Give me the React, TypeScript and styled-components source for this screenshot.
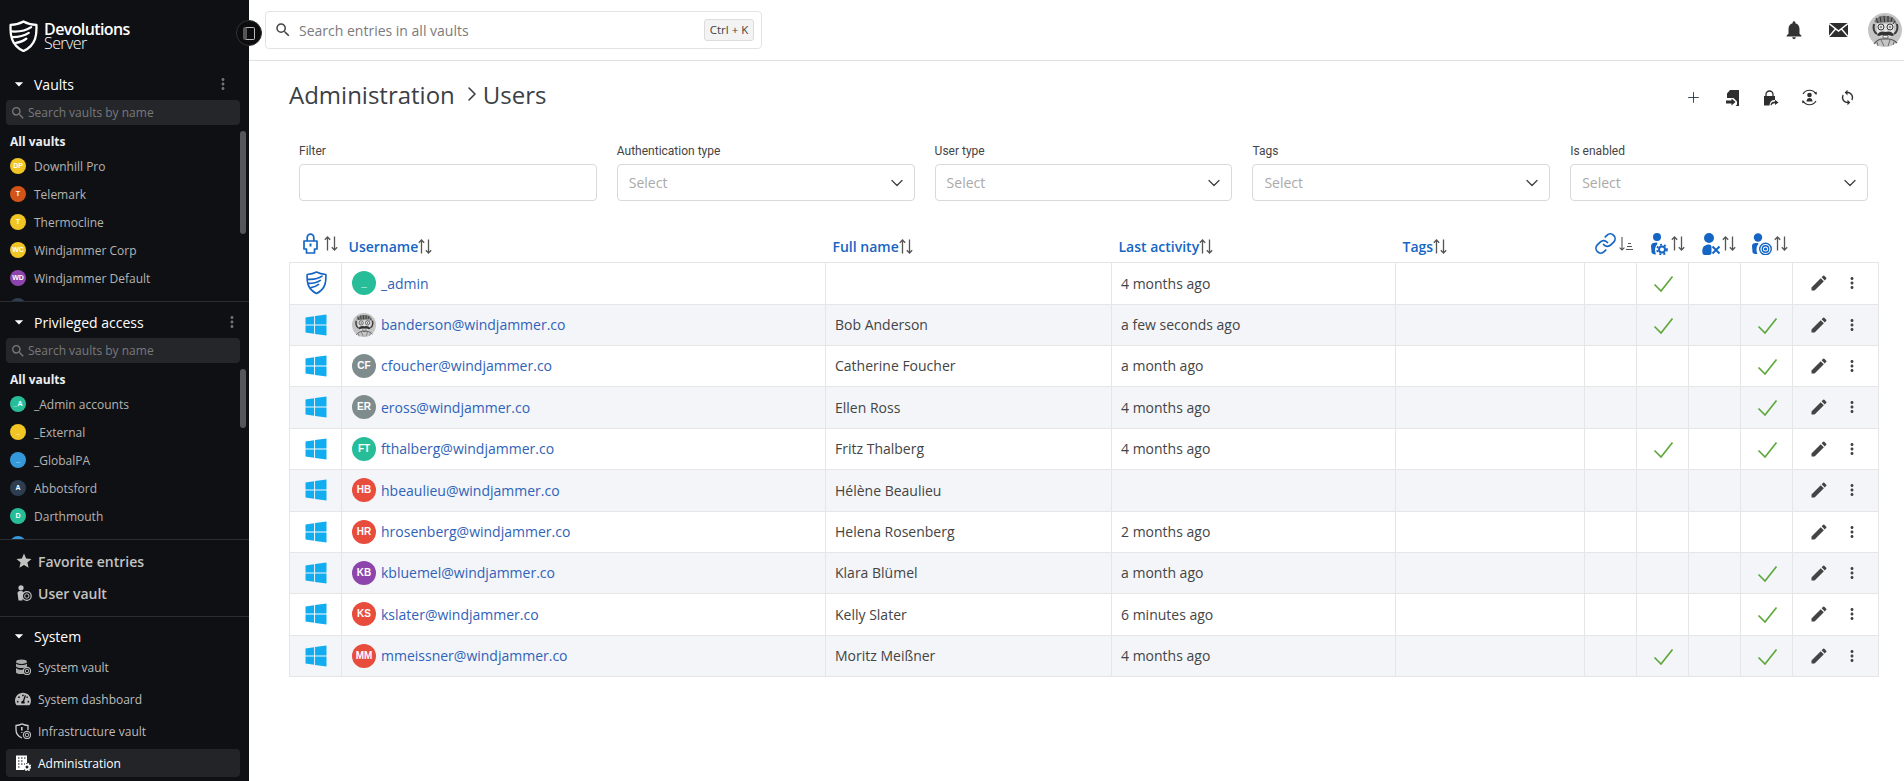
import { ReactElement } from 'react'
import styled, { createGlobalStyle } from 'styled-components'
import { FaTachometerAlt, FaWindows } from 'react-icons/fa'
import { MdArrowDropDown, MdEdit, MdMoreVert, MdNotifications, MdSearch, MdStar, MdSync } from 'react-icons/md'
import { LuChevronDown, LuChevronRight, LuLink, LuPlus } from 'react-icons/lu'

const BLUE = '#1565c4'

const GlobalStyle = createGlobalStyle`
  html, body { margin: 0; padding: 0; height: 100%; background: #fff; overflow: hidden; }
  body { font-family: "Open Sans", "Liberation Sans", sans-serif; color: #444; }
  * { box-sizing: border-box; }
`

const Shell = styled.div`
  display: flex;
  height: 781px;
  width: 1904px;
  position: relative;
`

/* sidebar */

const Sidebar = styled.aside`
  width: 249px;
  flex: none;
  height: 100%;
  background: #0f1013;
  color: #bdbdbd;
  overflow: hidden;
  display: flex;
  flex-direction: column;
`

const Brand = styled.div`
  height: 64px;
  padding: 8px 0 0 9px;
  display: flex;
  align-items: center;
  gap: 6px;
  flex: none;
`

const BrandText = styled.div`
  display: flex;
  flex-direction: column;
  color: #fff;
  font-size: 16px;
  line-height: 14px;
  letter-spacing: -0.6px;
`

const BrandName = styled.span`
  font-weight: 600;
`

const BrandSub = styled.span`
  font-weight: 300;
`

const Section = styled.section`
  height: 238px;
  padding-top: 8px;
  flex: none;
  border-bottom: 1px solid #2c2d30;
  position: relative;
  overflow: hidden;
`

const SectionHead = styled.div<{ $moreGap?: number }>`
  height: 24px;
  display: flex;
  align-items: center;
  padding: 0 ${(p) => p.$moreGap ?? 17}px 0 9px;
  color: #fff;
  font-size: 14px;
  svg.caret { color: #fff; margin-right: 5px; }
  span { flex: 1; }
  svg.more { color: #6f7175; }
`

const VaultSearch = styled.div`
  margin: 4px 9px 0 6px;
  height: 25px;
  background: #25262a;
  border-radius: 4px;
  display: flex;
  align-items: center;
  gap: 2px;
  padding-left: 4px;
  color: #77797d;
  font-size: 12px;
`

const VaultList = styled.div`
  height: 176px;
  overflow: hidden;
  padding-top: 7px;
`

const VaultHeading = styled.div`
  height: 20px;
  line-height: 20px;
  padding-left: 10px;
  font-size: 12px;
  font-weight: 700;
  color: #eee;
`

const VaultItem = styled.div`
  height: 28px;
  display: flex;
  align-items: center;
  gap: 8px;
  padding-left: 10px;
  font-size: 12px;
  color: #b4b4b4;
`

const VaultBadge = styled.span<{ $bg: string }>`
  width: 16px;
  height: 16px;
  flex: none;
  border-radius: 50%;
  background: ${(p) => p.$bg};
  color: #fff;
  font: 700 7px/16px "Liberation Sans", sans-serif;
  text-align: center;
`

const ScrollThumb = styled.div<{ $height: number }>`
  position: absolute;
  right: 3px;
  top: 67px;
  height: ${(p) => p.$height}px;
  width: 6px;
  border-radius: 3px;
  background: #55565a;
`

const QuickLinks = styled.div`
  height: 77px;
  flex: none;
  padding-top: 5px;
  border-bottom: 1px solid #2c2d30;
`

const QuickLink = styled.div`
  height: 32px;
  display: flex;
  align-items: center;
  gap: 5px;
  padding-left: 15px;
  font-size: 14px;
  font-weight: 600;
  color: #c2c2c2;
  svg { flex: none; width: 18px; }
`

const SystemSection = styled.section`
  padding-top: 7px;
`

const SystemList = styled.nav`
  margin-top: 5px;
  display: flex;
  flex-direction: column;
  gap: 4px;
`

const SystemItem = styled.div<{ $active?: boolean }>`
  height: 28px;
  margin: 0 9px 0 6px;
  padding-left: 9px;
  display: flex;
  align-items: center;
  gap: 7px;
  border-radius: 4px;
  font-size: 12px;
  background: ${(p) => (p.$active ? '#232427' : 'transparent')};
  color: ${(p) => (p.$active ? '#fff' : '#bdbdbd')};
  svg { flex: none; }
`

const CollapseButton = styled.button`
  position: absolute;
  left: 236px;
  top: 20px;
  width: 26px;
  height: 26px;
  border-radius: 50%;
  border: 1px solid #333;
  background: #0c0c0e;
  padding: 0;
  display: flex;
  align-items: center;
  justify-content: center;
  z-index: 2;
`

const CollapseGlyph = styled.span`
  width: 12px;
  height: 13px;
  border: 1.5px solid #bbb;
  border-radius: 2px;
  border-left-width: 4px;
  border-left-color: #555;
`

/* top bar */

const Main = styled.main`
  flex: 1;
  min-width: 0;
  display: flex;
  flex-direction: column;
`

const TopBar = styled.header`
  height: 61px;
  flex: none;
  border-bottom: 1px solid #e1e1e1;
  display: flex;
  align-items: center;
  padding: 0 2px 0 16px;
`

const GlobalSearch = styled.label`
  width: 497px;
  height: 38px;
  border: 1px solid #e3e3e3;
  border-radius: 4px;
  display: flex;
  align-items: center;
  padding: 0 7px 0 8px;
  gap: 5px;
  color: #444;
`

const GlobalInput = styled.input`
  flex: 1;
  border: 0;
  outline: 0;
  min-width: 0;
  font: 400 14px "Open Sans", sans-serif;
  &::placeholder { color: #7b7b7b; opacity: 1; }
`

const Shortcut = styled.kbd`
  width: 50px;
  height: 22px;
  border: 1px solid #dcdcdc;
  border-radius: 3px;
  background: #f3f3f3;
  font: 400 11.5px/20px "Open Sans", sans-serif;
  text-align: center;
  color: #444;
`

const TopActions = styled.div`
  margin-left: auto;
  display: flex;
  align-items: center;
`

const TopIcon = styled.span`
  width: 45px;
  display: flex;
  justify-content: center;
  color: #333;
  &:nth-child(2) { margin-right: 7px; }
`

const UserPhoto = styled.span<{ $size: number }>`
  width: ${(p) => p.$size}px;
  height: ${(p) => p.$size}px;
  flex: none;
  display: block;
  svg { display: block; }
`

/* page */

const Page = styled.div`
  flex: 1;
  padding: 0 26px 0 40px;
`

const TitleRow = styled.div`
  height: 66px;
  display: flex;
  align-items: center;
  justify-content: space-between;
`

const Title = styled.h1`
  margin: 0;
  display: flex;
  align-items: center;
  font-size: 24px;
  font-weight: 500;
  color: #3b3f45;
  svg { margin: 0 -1px 0 5px; }
`

const PageActions = styled.div`
  display: flex;
  align-items: center;
  padding: 7px 11px 0 0;
  color: #333;
`

const PageAction = styled.span`
  width: 38.5px;
  display: flex;
  justify-content: center;
`

const Filters = styled.div`
  margin-top: 16px;
  padding: 0 10px;
  display: grid;
  grid-template-columns: repeat(5, 1fr);
  gap: 20px;
`

const Field = styled.div`
  display: flex;
  flex-direction: column;
  gap: 5px;
`

const FieldLabel = styled.label`
  font: 400 12px/16px Roboto, sans-serif;
  color: #444;
`

const FieldBox = styled.div`
  height: 37px;
  border: 1px solid #d9d9d9;
  border-radius: 4px;
  display: flex;
  align-items: center;
  justify-content: space-between;
  padding: 0 7px 0 11px;
  font-size: 14px;
  color: #a9a9a9;
  background: #fff;
  svg { color: #444; }
`

const Table = styled.table`
  margin-top: 20px;
  width: 1589px;
  table-layout: fixed;
  border-collapse: collapse;
`

const HeadCell = styled.th<{ $pad?: number }>`
  height: 41px;
  padding: 10px 0 0 ${(p) => p.$pad ?? 7}px;
  text-align: left;
  vertical-align: middle;
`

const HeadLabel = styled.span<{ $gap?: number }>`
  display: inline-flex;
  align-items: center;
  gap: ${(p) => p.$gap ?? 0}px;
  font-size: 14px;
  font-weight: 600;
  color: ${BLUE};
`

const Row = styled.tr<{ $alt: boolean; $height: number }>`
  height: ${(p) => p.$height}px;
  background: ${(p) => (p.$alt ? '#f3f5f9' : '#fff')};
`

const Cell = styled.td`
  border: 1px solid #e6e6e6;
  padding: 0 9px;
  font-size: 14px;
  color: #444;
  white-space: nowrap;
`

const CenterCell = styled(Cell)`
  padding: 0 0 0 1px;
  text-align: center;
  svg { display: inline-block; vertical-align: middle; }
`

const UserCell = styled.div`
  display: flex;
  align-items: center;
  gap: 5px;
  padding-left: 1px;
`

const UserLink = styled.a`
  color: #2f62b8;
  text-decoration: none;
`

const UserBadge = styled.span<{ $bg: string }>`
  width: 24px;
  height: 24px;
  flex: none;
  border-radius: 50%;
  background: ${(p) => p.$bg};
  color: #fff;
  font: 700 10px/24px "Liberation Sans", sans-serif;
  text-align: center;
`

const RowTools = styled.div`
  display: flex;
  align-items: center;
  justify-content: flex-end;
  gap: 14px;
  padding-right: 8px;
  color: #444;
`

/* drawings */

function ShieldLogo({ color, size, weight }: { color: string; size: number; weight: number }): ReactElement {
  return (
    <svg width={size} height={size * 1.12} viewBox="0 0 30 34" fill="none" stroke={color} strokeWidth={weight} strokeLinecap="round">
      <path d="M15 1.5 C19 3.8 24 4.8 28.5 5 C29 14 28.8 26 15 32.5 C1.2 26 1 14 1.5 5 C6 4.8 11 3.8 15 1.5 Z" strokeLinejoin="round" />
      <path d="M2.5 12 C10 12.5 18 11 23 7.5" />
      <path d="M3.5 18 C10 18 16 16.5 20.5 13.5" />
      <path d="M7 24 C11 23.5 15 22 18 19.5" />
    </svg>
  )
}

function SortArrows(): ReactElement {
  return (
    <svg width="14" height="15" viewBox="0 0 14 15" fill="none" stroke="#555" strokeWidth="1.3">
      <path d="M3.5 14.5 V1 M0.8 3.7 L3.5 1 L6.2 3.7" />
      <path d="M10.5 0.5 V14 M7.8 11.3 L10.5 14 L13.2 11.3" />
    </svg>
  )
}

function SortAmount(): ReactElement {
  return (
    <svg width="14" height="15" viewBox="0 0 14 15" fill="none" stroke="#555" strokeWidth="1.1">
      <path d="M3 1 V14 M0.6 11.6 L3 14 L5.4 11.6" />
      <path d="M7 13.5 H14 M8 10.5 H13 M9 7.5 H12" />
    </svg>
  )
}

function LockPerson(): ReactElement {
  return (
    <svg width="15" height="21" viewBox="0 0 15 21" fill="none" stroke={BLUE} strokeWidth="1.7" strokeLinejoin="round">
      <path d="M4.2 8 V4.5 A3.3 3.3 0 0 1 10.8 4.5 V8" />
      <path d="M1 8 H14 V16 H11.5 V20 H3.5 V16 H1 Z" />
      <path d="M7.5 10.5 V13.5" strokeWidth="2" />
    </svg>
  )
}

function PersonGear(): ReactElement {
  return (
    <svg width="17" height="22" viewBox="0 0 17 22">
      <circle cx="6" cy="4" r="4" fill={BLUE} />
      <path d="M0 13 C0 10.5 2 9.5 6 9.5 L6.5 11 C5 12.5 4 14.5 4 17 C4 18.5 4.5 20 5 21.5 C2 21.5 0.5 20.5 0.5 19 Z" fill={BLUE} />
      <g fill="none" stroke={BLUE}>
        <circle cx="11" cy="16.5" r="3" strokeWidth="2" />
        <circle cx="11" cy="16.5" r="4.9" strokeWidth="1.8" strokeDasharray="2 2.1" />
      </g>
    </svg>
  )
}

function PersonCross(): ReactElement {
  return (
    <svg width="18" height="22" viewBox="0 0 18 22">
      <circle cx="7" cy="5" r="5" fill={BLUE} />
      <path d="M0.5 16 C1 13 4 11.5 7 11.5 C8.5 11.5 9.5 12.5 9.5 14 V20 C9.5 21 8.5 22 7 22 H2.5 C0.5 22 0 19 0.5 16 Z" fill={BLUE} />
      <path d="M10.5 13.5 L17.5 20.5 M17.5 13.5 L10.5 20.5" stroke={BLUE} strokeWidth="2" />
    </svg>
  )
}

function PersonTarget(): ReactElement {
  return (
    <svg width="20" height="22" viewBox="0 0 20 22">
      <circle cx="6" cy="4.5" r="4.2" fill={BLUE} />
      <path d="M0 13 C0 10.5 2 10 6 10 L6.5 11 C5 12.5 4.5 14.5 4.5 16.5 C4.5 18.5 5 20 5.5 21 C2 21 0.5 20.5 0.5 19 Z" fill={BLUE} />
      <g fill="none" stroke={BLUE} strokeWidth="1.4">
        <circle cx="13.5" cy="16" r="5.8" />
        <circle cx="13.5" cy="16" r="3.2" />
        <circle cx="13.5" cy="16" r="0.9" />
      </g>
    </svg>
  )
}

function Check(): ReactElement {
  return (
    <svg width="21" height="18" viewBox="0 0 21 18" fill="none" stroke="#5fa83c" strokeWidth="1.7">
      <path d="M1.5 9.5 L8 16 L19.5 1.5" />
    </svg>
  )
}

function Portrait({ size }: { size: number }): ReactElement {
  return (
    <UserPhoto $size={size}>
      <svg width={size} height={size} viewBox="0 0 34 34">
        <circle cx="17" cy="17" r="17" fill="#c4c4c4" />
        <path d="M6 9 C9 3 14 2 19 3 C25 3 29 7 29 13 L26 9 L9 10 Z" fill="#7b7b7b" />
        <path d="M8 5 L10 10 M12 3.5 L13 9 M16 3 L16.5 9 M20 3 L20 9 M24 4.5 L23 9 M27 8 L25 11" stroke="#2f2f2f" strokeWidth="1" />
        <path d="M9 11 H26 V20 C25 24 21 25 17 25 C13 25 9 23 9 19 Z" fill="#e0e0e0" />
        <path d="M6 11 C5 15 6 19 9 21 M29 11 C30 15 29 19 26 21" fill="none" stroke="#3a3a3a" strokeWidth="2" />
        <circle cx="13" cy="14" r="3" fill="none" stroke="#3a3a3a" strokeWidth="1" />
        <circle cx="22" cy="14" r="3" fill="none" stroke="#3a3a3a" strokeWidth="1" />
        <circle cx="13" cy="14" r="0.8" fill="#2a2a2a" />
        <circle cx="22" cy="14" r="0.8" fill="#2a2a2a" />
        <path d="M9 22 C11 18 15 18 17.5 19 C20 18 24 18 26 22 C24 24 22 22 20 22 L15 22 C13 22 11 24 9 22 Z" fill="#333" />
        <path d="M15 22.5 H20 V25 H15 Z" fill="#f4f4f4" stroke="#222" strokeWidth="0.6" />
        <path d="M6 31 C8 28 12 26 15 26 L20 26 C24 26 27 28 29 30" fill="none" stroke="#555" strokeWidth="1.2" />
        <path d="M13 27 L16 33 M22 27 L20 33 M9 29 L10 33 M26 29 L25 32" stroke="#6b6b6b" />
      </svg>
    </UserPhoto>
  )
}

function MailIcon(): ReactElement {
  return (
    <svg width="19" height="14" viewBox="0 0 19 14">
      <rect width="19" height="14" fill="#2e2e2e" />
      <path d="M0 0.5 L9.5 8 L19 0.5 M0 13.5 L6.5 6 M19 13.5 L12.5 6" fill="none" stroke="#fff" strokeWidth="1.4" />
    </svg>
  )
}

function FileArrow(): ReactElement {
  return (
    <svg width="13" height="16" viewBox="0 0 13 16" fill="#2e2e2e">
      <path d="M4 0 H13 V16 H9.5 L11 14.5 V11.5 L7.5 8 H1 V3.5 Z" />
      <path d="M0 10.5 H5.5 V8.5 L9.5 12 L5.5 15.5 V13.5 H0 Z" />
    </svg>
  )
}

function LockArrow(): ReactElement {
  return (
    <svg width="16" height="16" viewBox="0 0 16 16">
      <path d="M3 6 V4.5 A3.5 3.5 0 0 1 10 4.5 V6" fill="none" stroke="#2e2e2e" strokeWidth="1.3" />
      <path d="M1 6 H12 V10 C9 10 7 11 6.5 15.5 H1 Z" fill="#2e2e2e" />
      <path d="M7.5 15 C8 12 10 11.5 12 11.5 V9.8 L15.5 12.5 L12 15 V13.3 C10 13.3 9 14 8.5 15.5 Z" fill="#2e2e2e" />
    </svg>
  )
}

function CircleUser(): ReactElement {
  return (
    <svg width="17" height="17" viewBox="0 0 17 17" fill="none">
      <path d="M2 5 A7.5 7.5 0 0 1 15 5 M15 12 A7.5 7.5 0 0 1 2 12" stroke="#2e2e2e" strokeWidth="1.2" />
      <path d="M13 3.8 L15.5 6 L15.8 2.8 Z M4 13.2 L1.5 11 L1.2 14.2 Z" fill="#2e2e2e" />
      <circle cx="8.5" cy="6" r="2.3" fill="#2e2e2e" />
      <path d="M5.5 12.5 C5.5 10 7 9 8.5 9 C10 9 11.5 10 11.5 12.5 Z" fill="#2e2e2e" />
    </svg>
  )
}

function DiscBadge({ cx, cy, r, stroke }: { cx: number; cy: number; r: number; stroke: string }): ReactElement {
  return (
    <g fill="none" stroke={stroke}>
      <circle cx={cx} cy={cy} r={r} fill="#0f1013" strokeWidth="1.2" />
      <circle cx={cx} cy={cy} r={r / 2} strokeWidth="1" />
    </g>
  )
}

function UserVaultIcon(): ReactElement {
  return (
    <svg width="18" height="16" viewBox="0 0 16 16" fill="#c2c2c2">
      <circle cx="5" cy="2.8" r="2.6" />
      <path d="M1.5 8 C1.5 6.5 3 6 5 6 C7 6 8 7 7.5 8 L6.5 15.5 H2.5 Z" />
      <DiscBadge cx={10.8} cy={11} r={4.4} stroke="#c2c2c2" />
    </svg>
  )
}

function DatabaseIcon(): ReactElement {
  return (
    <svg width="16" height="16" viewBox="0 0 16 16" fill="#aaa">
      <ellipse cx="6.5" cy="2.7" rx="5.5" ry="2.3" />
      <path d="M1 4.5 C3 6.5 10 6.5 12 4.5 V7.5 C10 9.5 3 9.5 1 7.5 Z" />
      <path d="M1 9 C3 11 8 11 9 10.5 V14.8 C6 15.5 2 15 1 13.5 Z" />
      <DiscBadge cx={12} cy={12} r={3.6} stroke="#bbb" />
    </svg>
  )
}

function ShieldBadgeIcon(): ReactElement {
  return (
    <svg width="16" height="16" viewBox="0 0 16 16" fill="none" stroke="#ccc" strokeWidth="1.3">
      <path d="M7 0.8 C9 1.8 11 2.3 13 2.5 V7 M7 15 C3 13.5 1 10 1 6.5 V2.5 C3 2.3 5 1.8 7 0.8" />
      <path d="M6.8 4 V7.5 M6.8 9 V9.8" strokeWidth="1.6" />
      <DiscBadge cx={12} cy={12} r={3.6} stroke="#bbb" />
    </svg>
  )
}

function AdminIcon(): ReactElement {
  return (
    <svg width="16" height="16" viewBox="0 0 16 16">
      <path d="M1 0.5 H12 V8 H9 V15 H1 Z" fill="#fff" />
      <path d="M3 3 H4.5 M6 3 H7.5 M9 3 H10.5 M3 6 H4.5 M6 6 H7.5 M3 9 H4.5 M6 9 H7.5 M3 12 H4.5" stroke="#0f1013" strokeWidth="1.2" />
      <circle cx="12" cy="12" r="2.4" fill="none" stroke="#fff" strokeWidth="1.8" />
      <circle cx="12" cy="12" r="3.8" fill="none" stroke="#fff" strokeWidth="1.2" strokeDasharray="1.5 1.5" />
    </svg>
  )
}

/* data */

const vaults = [
  { initials: 'DP', name: 'Downhill Pro', color: '#f1c523' },
  { initials: 'T', name: 'Telemark', color: '#d35419' },
  { initials: 'T', name: 'Thermocline', color: '#f1c523' },
  { initials: 'WC', name: 'Windjammer Corp', color: '#f1c523' },
  { initials: 'WD', name: 'Windjammer Default', color: '#8e44ad' },
  { initials: '', name: '', color: '#2c3e50' },
]

const privileged = [
  { initials: '_A', name: '_Admin accounts', color: '#26bd98' },
  { initials: '_', name: '_External', color: '#f1c523' },
  { initials: '_', name: '_GlobalPA', color: '#3498db' },
  { initials: 'A', name: 'Abbotsford', color: '#2c3e50' },
  { initials: 'D', name: 'Darthmouth', color: '#26bd98' },
  { initials: '', name: '', color: '#3498db' },
]

type User = {
  mail: string
  name: string
  activity: string
  initials?: string
  color?: string
  admin?: boolean
  gear?: boolean
  target?: boolean
}

const users: User[] = [
  { mail: '_admin', name: '', activity: '4 months ago', initials: '_', color: '#26bd98', admin: true, gear: true },
  { mail: 'banderson@windjammer.co', name: 'Bob Anderson', activity: 'a few seconds ago', gear: true, target: true },
  { mail: 'cfoucher@windjammer.co', name: 'Catherine Foucher', activity: 'a month ago', initials: 'CF', color: '#7f8c8d', target: true },
  { mail: 'eross@windjammer.co', name: 'Ellen Ross', activity: '4 months ago', initials: 'ER', color: '#7f8c8d', target: true },
  { mail: 'fthalberg@windjammer.co', name: 'Fritz Thalberg', activity: '4 months ago', initials: 'FT', color: '#26bd98', gear: true, target: true },
  { mail: 'hbeaulieu@windjammer.co', name: 'Hélène Beaulieu', activity: '', initials: 'HB', color: '#e74c3c' },
  { mail: 'hrosenberg@windjammer.co', name: 'Helena Rosenberg', activity: '2 months ago', initials: 'HR', color: '#e74c3c' },
  { mail: 'kbluemel@windjammer.co', name: 'Klara Blümel', activity: 'a month ago', initials: 'KB', color: '#8e44ad', target: true },
  { mail: 'kslater@windjammer.co', name: 'Kelly Slater', activity: '6 minutes ago', initials: 'KS', color: '#e74c3c', target: true },
  { mail: 'mmeissner@windjammer.co', name: 'Moritz Meißner', activity: '4 months ago', initials: 'MM', color: '#e74c3c', gear: true, target: true },
]

const columns = [52, 484, 286, 284, 189, 52, 52, 52, 52, 86]
const rowHeights = [42, 41, 41, 42, 41, 42, 41, 41, 42, 41]

function VaultGroup(props: { title: string; items: typeof vaults; moreGap: number; thumbHeight: number }): ReactElement {
  return (
    <Section>
      <SectionHead $moreGap={props.moreGap}>
        <MdArrowDropDown className="caret" size={20} />
        <span>{props.title}</span>
        <MdMoreVert className="more" size={18} />
      </SectionHead>
      <VaultSearch>
        <MdSearch size={16} />
        Search vaults by name
      </VaultSearch>
      <VaultList>
        <VaultHeading>All vaults</VaultHeading>
        {props.items.map((v, i) => (
          <VaultItem key={i}>
            <VaultBadge $bg={v.color}>{v.initials}</VaultBadge>
            {v.name}
          </VaultItem>
        ))}
      </VaultList>
      <ScrollThumb $height={props.thumbHeight} />
    </Section>
  )
}

export default function App(): ReactElement {
  return (
    <Shell>
      <GlobalStyle />
      <Sidebar>
        <Brand>
          <ShieldLogo color="#fff" size={29} weight={2.4} />
          <BrandText>
            <BrandName>Devolutions</BrandName>
            <BrandSub>Server</BrandSub>
          </BrandText>
        </Brand>
        <VaultGroup title="Vaults" items={vaults} moreGap={17} thumbHeight={103} />
        <VaultGroup title="Privileged access" items={privileged} moreGap={8} thumbHeight={59} />
        <QuickLinks>
          <QuickLink>
            <MdStar size={18} />
            Favorite entries
          </QuickLink>
          <QuickLink>
            <UserVaultIcon />
            User vault
          </QuickLink>
        </QuickLinks>
        <SystemSection>
          <SectionHead>
            <MdArrowDropDown className="caret" size={20} />
            <span>System</span>
          </SectionHead>
          <SystemList>
            <SystemItem>
              <DatabaseIcon />
              System vault
            </SystemItem>
            <SystemItem>
              <FaTachometerAlt size={16} color="#bbb" />
              System dashboard
            </SystemItem>
            <SystemItem>
              <ShieldBadgeIcon />
              Infrastructure vault
            </SystemItem>
            <SystemItem $active>
              <AdminIcon />
              Administration
            </SystemItem>
          </SystemList>
        </SystemSection>
      </Sidebar>
      <CollapseButton aria-label="Collapse">
        <CollapseGlyph />
      </CollapseButton>
      <Main>
        <TopBar>
          <GlobalSearch>
            <MdSearch size={18} />
            <GlobalInput placeholder="Search entries in all vaults" />
            <Shortcut>Ctrl + K</Shortcut>
          </GlobalSearch>
          <TopActions>
            <TopIcon>
              <MdNotifications size={22} />
            </TopIcon>
            <TopIcon>
              <MailIcon />
            </TopIcon>
            <Portrait size={34} />
          </TopActions>
        </TopBar>
        <Page>
          <TitleRow>
            <Title>
              Administration
              <LuChevronRight size={24} strokeWidth={1.6} />
              Users
            </Title>
            <PageActions>
              <PageAction>
                <LuPlus size={17} strokeWidth={1.3} color="#2b3a4a" />
              </PageAction>
              <PageAction>
                <FileArrow />
              </PageAction>
              <PageAction>
                <LockArrow />
              </PageAction>
              <PageAction>
                <CircleUser />
              </PageAction>
              <PageAction>
                <MdSync size={17} />
              </PageAction>
            </PageActions>
          </TitleRow>
          <Filters>
            <Field>
              <FieldLabel>Filter</FieldLabel>
              <FieldBox />
            </Field>
            {['Authentication type', 'User type', 'Tags', 'Is enabled'].map((label) => (
              <Field key={label}>
                <FieldLabel>{label}</FieldLabel>
                <FieldBox>
                  Select
                  <LuChevronDown size={20} strokeWidth={1.6} />
                </FieldBox>
              </Field>
            ))}
          </Filters>
          <Table>
            <colgroup>
              {columns.map((w, i) => (
                <col key={i} width={w} />
              ))}
            </colgroup>
            <thead>
              <tr>
                <HeadCell $pad={13}>
                  <HeadLabel $gap={6}>
                    <LockPerson />
                    <SortArrows />
                  </HeadLabel>
                </HeadCell>
                {['Username', 'Full name', 'Last activity', 'Tags'].map((label) => (
                  <HeadCell key={label}>
                    <HeadLabel>
                      {label}
                      <SortArrows />
                    </HeadLabel>
                  </HeadCell>
                ))}
                <HeadCell $pad={9}>
                  <HeadLabel $gap={2}>
                    <LuLink size={23} strokeWidth={1.8} />
                    <SortAmount />
                  </HeadLabel>
                </HeadCell>
                <HeadCell $pad={14}>
                  <HeadLabel $gap={3}>
                    <PersonGear />
                    <SortArrows />
                  </HeadLabel>
                </HeadCell>
                <HeadCell $pad={13}>
                  <HeadLabel $gap={2}>
                    <PersonCross />
                    <SortArrows />
                  </HeadLabel>
                </HeadCell>
                <HeadCell $pad={11}>
                  <HeadLabel $gap={2}>
                    <PersonTarget />
                    <SortArrows />
                  </HeadLabel>
                </HeadCell>
                <HeadCell />
              </tr>
            </thead>
            <tbody>
              {users.map((u, i) => (
                <Row key={u.mail} $alt={i % 2 === 1} $height={rowHeights[i]}>
                  <CenterCell>
                    {u.admin ? <ShieldLogo color={BLUE} size={21} weight={2.4} /> : <FaWindows size={24} color="#12adf0" />}
                  </CenterCell>
                  <Cell>
                    <UserCell>
                      {u.initials ? <UserBadge $bg={u.color!}>{u.initials}</UserBadge> : <Portrait size={24} />}
                      <UserLink href="#">{u.mail}</UserLink>
                    </UserCell>
                  </Cell>
                  <Cell>{u.name}</Cell>
                  <Cell>{u.activity}</Cell>
                  <Cell />
                  <Cell />
                  <CenterCell>{u.gear && <Check />}</CenterCell>
                  <Cell />
                  <CenterCell>{u.target && <Check />}</CenterCell>
                  <Cell>
                    <RowTools>
                      <MdEdit size={20} />
                      <MdMoreVert size={18} />
                    </RowTools>
                  </Cell>
                </Row>
              ))}
            </tbody>
          </Table>
        </Page>
      </Main>
    </Shell>
  )
}
